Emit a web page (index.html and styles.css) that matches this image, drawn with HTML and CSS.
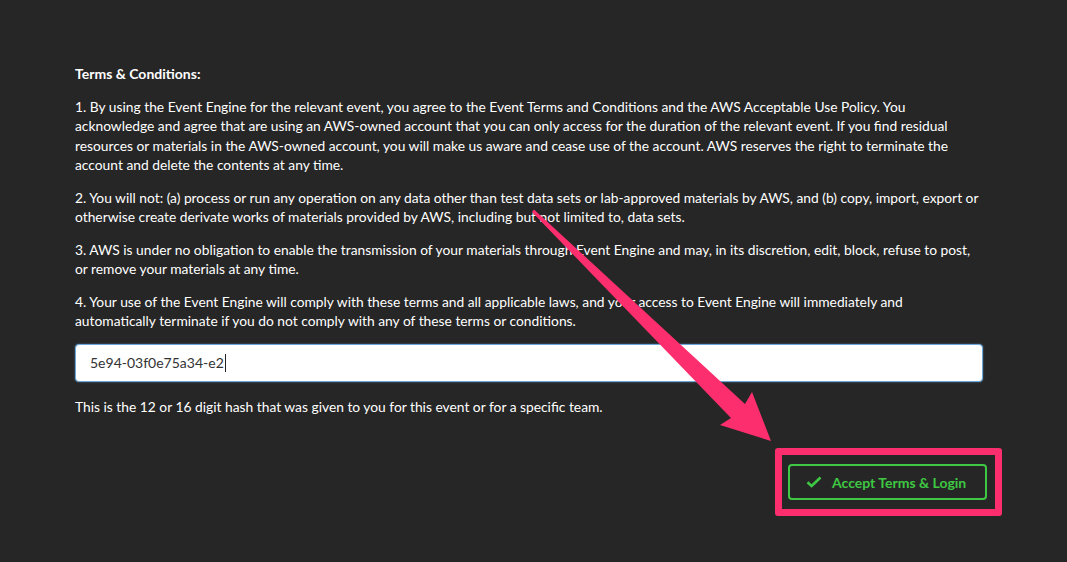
FILE: index.html
```html
<!DOCTYPE html>
<html>
<head>
<meta charset="utf-8">
<link rel="stylesheet" href="styles.css">
</head>
<body>
<div class="page">
  <div class="terms">
    <p class="title">Terms &amp; Conditions:</p>
    <p>1. By using the Event Engine for the relevant event, you agree to the Event Terms and Conditions and the AWS Acceptable Use Policy. You acknowledge and agree that are using an AWS-owned account that you can only access for the duration of the relevant event. If you find residual resources or materials in the AWS-owned account, you will make us aware and cease use of the account. AWS reserves the right to terminate the account and delete the contents at any time.</p>
    <p>2. You will not: (a) process or run any operation on any data other than test data sets or lab-approved materials by AWS, and (b) copy, import, export or otherwise create derivate works of materials provided by AWS, including but not limited to, data sets.</p>
    <p>3. AWS is under no obligation to enable the transmission of your materials through Event Engine and may, in its discretion, edit, block, refuse to post, or remove your materials at any time.</p>
    <p>4. Your use of the Event Engine will comply with these terms and all applicable laws, and your access to Event Engine will immediately and automatically terminate if you do not comply with any of these terms or conditions.</p>
  </div>
  <div class="field"><span class="value">5e94-03f0e75a34-e2</span><span class="caret"></span></div>
  <p class="help">This is the 12 or 16 digit hash that was given to you for this event or for a specific team.</p>
  <div class="actions">
    <div class="highlight">
      <button class="btn">
        <svg class="check" width="16" height="12" viewBox="0 0 16 12"><path d="M1.5 6.2 L5.6 10 L14.5 1.5" fill="none" stroke="#3ec843" stroke-width="2.6"/></svg>
        <span>Accept Terms &amp; Login</span>
      </button>
    </div>
  </div>
</div>
<svg class="arrow" width="1067" height="562" viewBox="0 0 1067 562">
  <polygon points="534,209.5 745,404 752,392 771,441 720,425 731,418 532,212" fill="#fd2e6d"/>
</svg>
</body>
</html>
```
FILE: styles.css
```css
html, body {
  margin: 0;
  padding: 0;
  background: #262626;
  width: 1067px;
  height: 562px;
  overflow: hidden;
}
body {
  font-family: Lato, "Open Sans", sans-serif;
  font-size: 14px;
  color: #ffffff;
  position: relative;
}
.page {
  padding: 64px 84px 0 75px;
}
.terms p {
  margin: 0 0 13px 0;
  line-height: 19.5px;
  font-size: 13.8px;
}
.terms .title {
  font-weight: bold;
  font-size: 14px;
}
.field {
  display: flex;
  align-items: center;
  height: 36px;
  border: 1px solid #6aa6d8;
  border-radius: 4px;
  background: #ffffff;
  padding: 0 14px;
  color: #333333;
  box-shadow: 0 0 2px rgba(102, 175, 233, 0.6);
}
.caret {
  display: inline-block;
  width: 1px;
  height: 18px;
  background: #222;
  margin-left: 1px;
}
.help {
  margin: 15px 0 0 0;
  line-height: 19.5px;
  font-size: 13.8px;
}
.actions {
  display: flex;
  justify-content: flex-end;
  margin-top: 32px;
  margin-right: -19px;
}
.highlight {
  border: 7px solid #fd2e6d;
  border-radius: 3px;
  padding: 9px 8px 9px 6px;
}
.btn {
  display: flex;
  align-items: center;
  gap: 10px;
  width: 199px;
  height: 36px;
  padding: 0 0 0 16px;
  background: transparent;
  border: 2px solid #3ec843;
  border-radius: 4px;
  color: #3ec843;
  font-family: Lato, "Open Sans", sans-serif;
  font-weight: bold;
  font-size: 14px;
}
.arrow {
  position: absolute;
  left: 0;
  top: 0;
  pointer-events: none;
}
```
